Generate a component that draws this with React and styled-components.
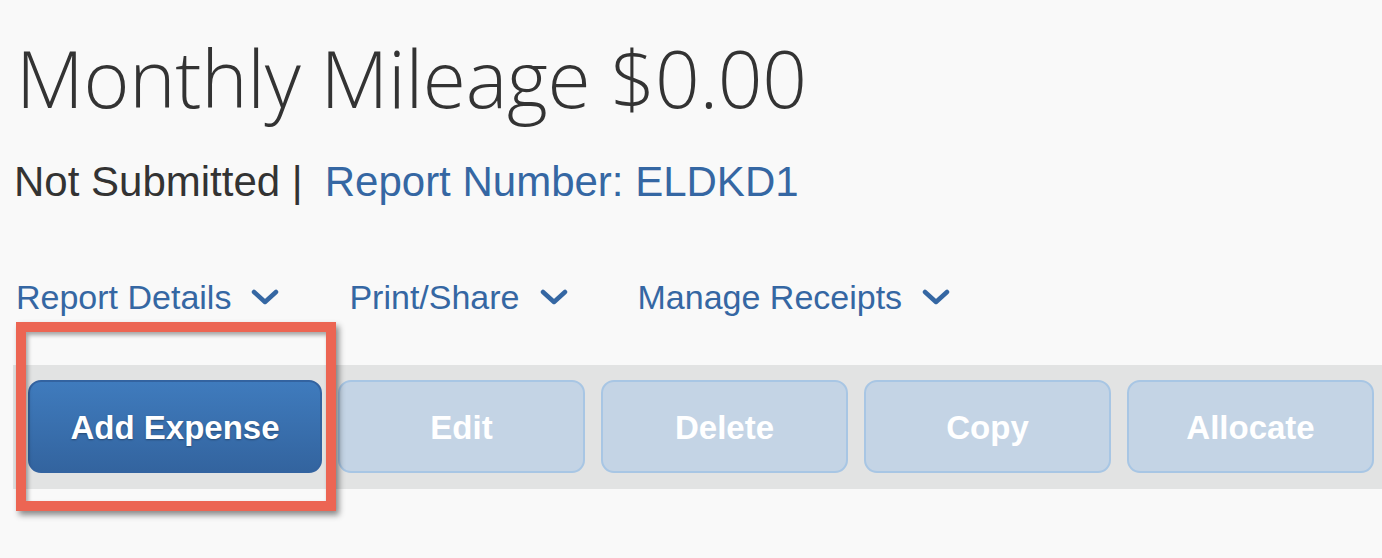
import React from "react";
import styled, { createGlobalStyle } from "styled-components";

const GlobalStyle = createGlobalStyle`
  html, body {
    margin: 0;
    padding: 0;
    background: #f9f9f9;
  }
  body {
    font-family: "Liberation Sans", Arial, sans-serif;
    overflow: hidden;
  }
`;

const Page = styled.div`
  width: 1382px;
  height: 558px;
  padding-left: 13px;
  box-sizing: border-box;
`;

const Title = styled.h1`
  margin: 0;
  padding: 28px 0 0 3px;
  font-family: "Open Sans", sans-serif;
  font-weight: 300;
  font-size: 78.5px;
  line-height: 100px;
  color: #333;
  letter-spacing: -0.3px;
`;

const StatusLine = styled.div`
  display: flex;
  align-items: baseline;
  margin-top: 30px;
  padding-left: 1px;
  font-size: 42px;
  line-height: 48px;
  color: #333;
`;

const ReportNumber = styled.a`
  color: #3567a3;
  margin-left: 22px;
  text-decoration: none;
`;

const Tabs = styled.nav`
  display: flex;
  align-items: center;
  margin-top: 71px;
  padding-left: 3px;
  gap: 70px;
`;

const Tab = styled.a`
  display: flex;
  align-items: center;
  gap: 20px;
  font-size: 34px;
  line-height: 40px;
  color: #3567a3;
  text-decoration: none;
`;

const Chevron = () => (
  <svg width="28" height="16" viewBox="0 0 28 16">
    <path
      d="M3 3 L14 13 L25 3"
      fill="none"
      stroke="#3567a3"
      strokeWidth="4.5"
      strokeLinecap="round"
      strokeLinejoin="round"
    />
  </svg>
);

const ToolbarWrap = styled.div`
  position: relative;
  margin-top: 48px;
`;

const Toolbar = styled.div`
  display: flex;
  gap: 16px;
  height: 124px;
  padding: 15px 0 0 15px;
  box-sizing: border-box;
  background: #e2e3e3;
`;

const Button = styled.button`
  width: ${(p) => (p.$wide ? "294px" : "247px")};
  height: 93px;
  padding-top: 4px;
  border-radius: 13px;
  font-family: "Liberation Sans", Arial, sans-serif;
  font-weight: 700;
  font-size: 33px;
  color: #fff;
  cursor: pointer;
  border: 2px solid ${(p) => (p.$primary ? "#3363a0" : "#a8c6e4")};
  background: ${(p) =>
    p.$primary
      ? "linear-gradient(to bottom, #3f7bbd, #33649f)"
      : "#c4d4e5"};
  text-shadow: ${(p) => (p.$primary ? "0 1px 2px rgba(0,0,0,0.35)" : "none")};
`;

const Highlight = styled.div`
  position: absolute;
  left: 3px;
  top: -43px;
  width: 320px;
  height: 189px;
  box-sizing: border-box;
  border: 10px solid #ec6553;
  box-shadow: 3px 4px 6px rgba(0, 0, 0, 0.45),
    inset 2px 3px 4px rgba(0, 0, 0, 0.35);
  pointer-events: none;
`;

export default function App() {
  return (
    <>
      <GlobalStyle />
      <Page>
        <Title>Monthly Mileage $0.00</Title>
        <StatusLine>
          Not Submitted |<ReportNumber>Report Number: ELDKD1</ReportNumber>
        </StatusLine>
        <Tabs>
          <Tab>
            Report Details <Chevron />
          </Tab>
          <Tab>
            Print/Share <Chevron />
          </Tab>
          <Tab>
            Manage Receipts <Chevron />
          </Tab>
        </Tabs>
        <ToolbarWrap>
          <Toolbar>
            <Button $wide $primary>Add Expense</Button>
            <Button>Edit</Button>
            <Button>Delete</Button>
            <Button>Copy</Button>
            <Button>Allocate</Button>
          </Toolbar>
          <Highlight />
        </ToolbarWrap>
      </Page>
    </>
  );
}
